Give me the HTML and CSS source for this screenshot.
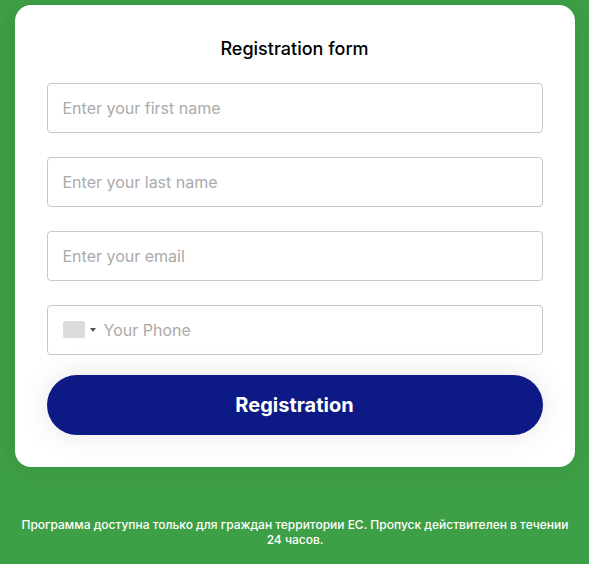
FILE: index.html
```
<!DOCTYPE html>
<html lang="ru">
<head>
  <meta charset="UTF-8">
  <title>Registration form</title>
  <link rel="stylesheet" href="styles.css">
</head>
<body>
  <form class="form">
    <h2 class="form-title">Registration form</h2>
    <input class="field" type="text" placeholder="Enter your first name">
    <input class="field" type="text" placeholder="Enter your last name">
    <input class="field" type="email" placeholder="Enter your email">
    <div class="field phone">
      <span class="flag"></span>
      <span class="arrow"></span>
      <input class="phone-input" type="tel" placeholder="Your Phone">
    </div>
    <button class="button" type="submit">Registration</button>
  </form>
  <p class="note">Программа доступна только для граждан территории ЕС. Пропуск действителен в течении 24 часов.</p>
</body>
</html>
```

FILE: styles.css
```
* {
  box-sizing: border-box;
}

body {
  margin: 0;
  padding: 5px 14px 0 15px;
  background: #3ea046;
  font-family: Inter, sans-serif;
  overflow: hidden;
}

.form {
  display: flex;
  flex-direction: column;
  height: 462px;
  padding: 32px;
  background: #fff;
  border-radius: 16px;
  box-shadow: 0 0 30px rgba(0, 0, 0, 0.1);
}

.form-title {
  margin: 0 1px 22px 0;
  font-size: 18px;
  font-weight: 500;
  line-height: 24px;
  text-align: center;
  color: #000;
}

.field {
  flex: none;
  width: 100%;
  height: 50px;
  margin-bottom: 24px;
  padding: 0 14.5px;
  border: 1px solid #c8c8c8;
  border-radius: 4px;
  background: #fff;
  font-family: inherit;
  font-size: 16px;
  outline: none;
}

::placeholder {
  color: #aaa;
}

.phone {
  display: flex;
  align-items: center;
  margin-bottom: 20px;
  padding: 0 15px;
}

.flag {
  width: 22px;
  height: 17px;
  margin-top: -1px;
  background: #dbdbdb;
  border-radius: 2px;
}

.arrow {
  margin: 0 7.5px 0 5px;
  border: 3px solid transparent;
  border-top: 4px solid #555;
  border-bottom: none;
}

.phone-input {
  flex: 1;
  padding: 0;
  border: none;
  background: none;
  font: inherit;
  outline: none;
}

.button {
  flex: none;
  height: 60px;
  padding: 0 1px 0 0;
  border: none;
  border-radius: 30px;
  background: #0d1985;
  box-shadow: 0 0 30px rgba(0, 0, 0, 0.1);
  color: #fff;
  font-family: inherit;
  font-size: 20px;
  font-weight: 700;
  cursor: pointer;
}

.note {
  margin: 50px 0 0;
  font-size: 12px;
  font-weight: 500;
  line-height: 15px;
  letter-spacing: -0.01px;
  text-align: center;
  color: #fff;
}
```
